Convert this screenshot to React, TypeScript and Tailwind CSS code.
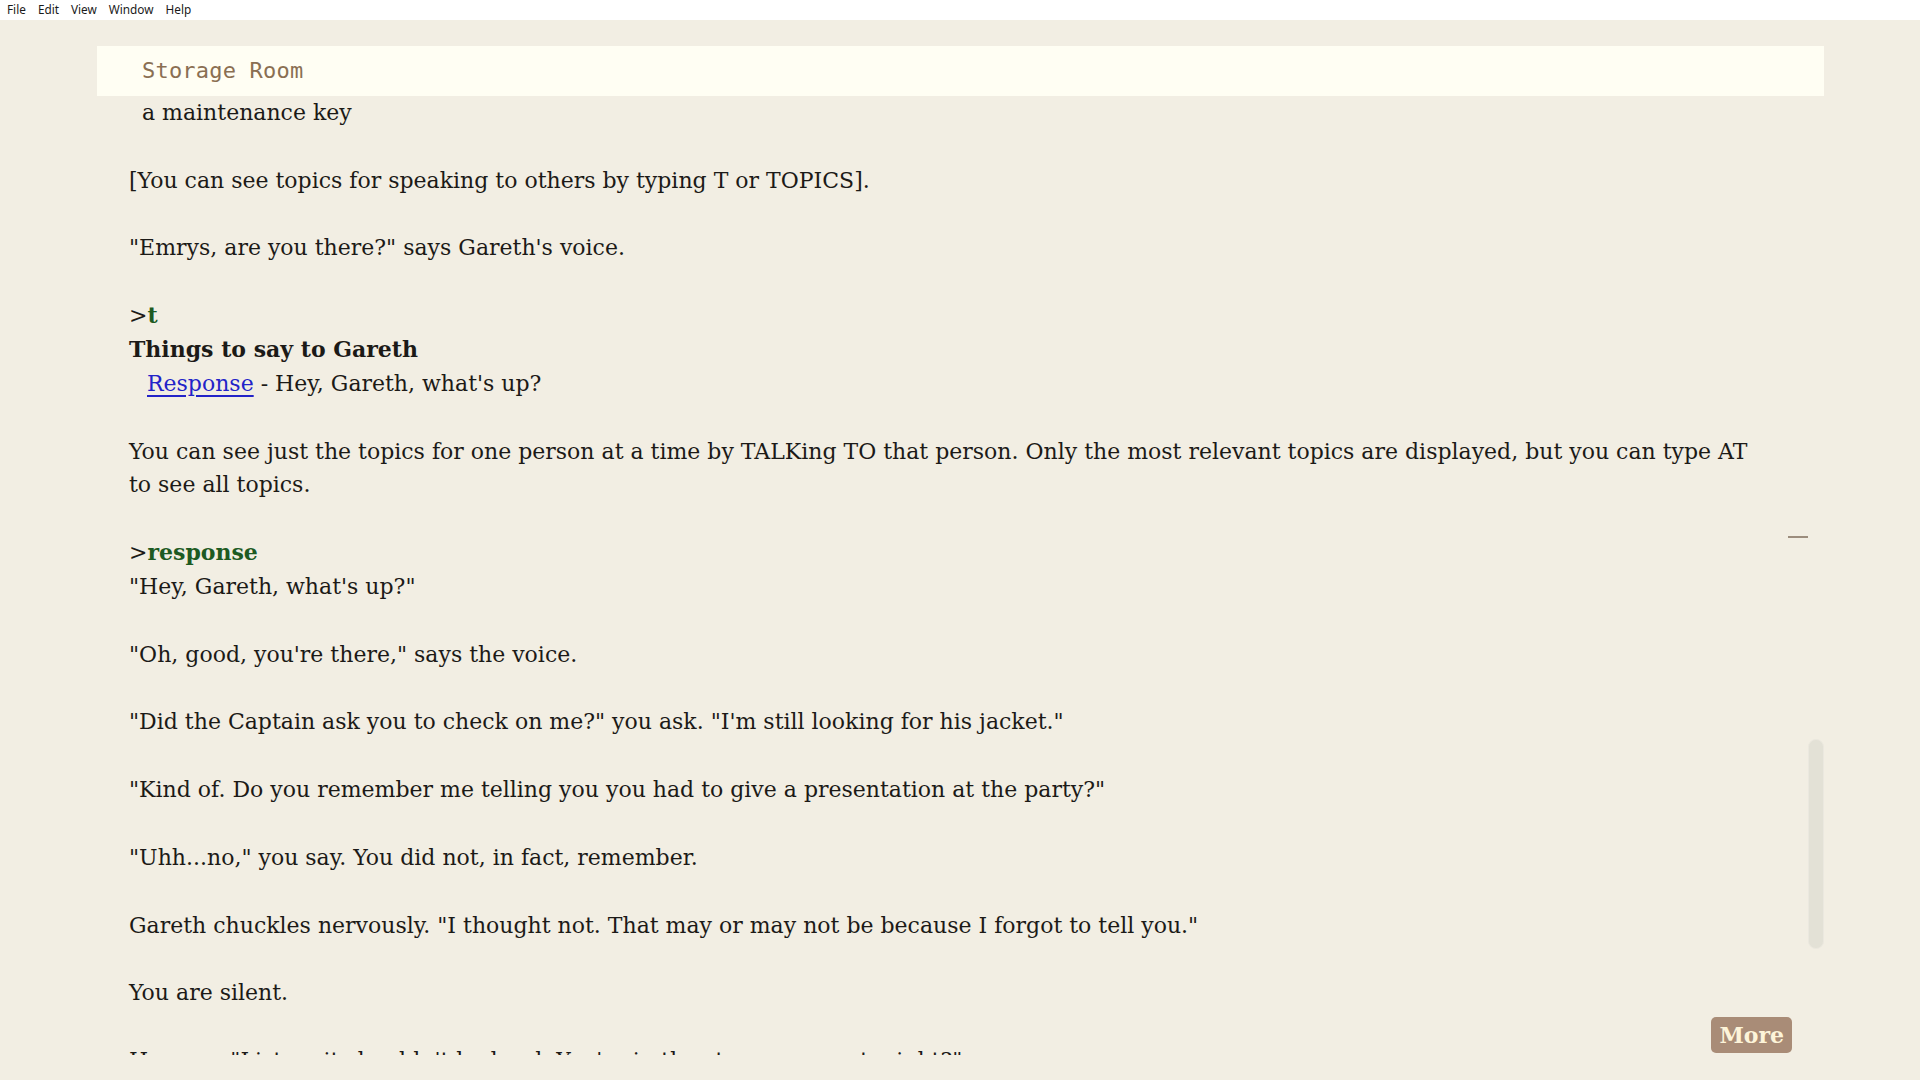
import React from 'react';

const menuItems = ['File', 'Edit', 'View', 'Window', 'Help'];

function Para({ children, gap = true }: { children: React.ReactNode; gap?: boolean }) {
  return <p className={gap ? 'mb-[33.86px]' : ''}>{children}</p>;
}

function Command({ text }: { text: string }) {
  return (
    <p>
      &gt;<span className="font-bold text-[#1d5a22]">{text}</span>
    </p>
  );
}

export default function App() {
  return (
    <div className="h-screen w-full flex flex-col bg-[#f2eee3] overflow-hidden">
      {/* window menu */}
      <div className="h-[20px] bg-white flex items-center gap-[12px] pl-[7px] text-[11.8px] text-[#1a1a1a] font-['Noto_Sans',sans-serif]">
        {menuItems.map((m) => (
          <span key={m}>{m}</span>
        ))}
      </div>

      <div className="flex-1 min-h-0 relative ml-[97px] mr-[96px] mt-[26px] mb-[25px] flex flex-col">
        <div className="h-[50px] shrink-0 bg-[#fffef3] flex items-center pl-[45px] pb-[2px]">
          <span className="font-['DejaVu_Sans_Mono',monospace] text-[22px] text-[#8a6f52] tracking-[0.2px]">Storage Room</span>
        </div>

        <div className="flex-1 min-h-0 overflow-hidden pl-[32px] pr-[62px] font-['DejaVu_Serif',serif] text-[22px] leading-[33.86px] text-[#1c1a17]">
          <Para>
            <span className="pl-[13px]">a maintenance key</span>
          </Para>
          <Para>[You can see topics for speaking to others by typing T or TOPICS].</Para>
          <Para>"Emrys, are you there?" says Gareth's voice.</Para>
          <Command text="t" />
          <p className="font-bold">Things to say to Gareth</p>
          <Para>
            <span className="pl-[18px]">
              <a className="text-[#2323c8] underline underline-offset-[4px]">Response</a> - Hey, Gareth, what's up?
            </span>
          </Para>
          <Para>
            You can see just the topics for one person at a time by TALKing TO that person. Only the most relevant topics are displayed, but you can type AT to see all topics.
          </Para>
          <Command text="response" />
          <Para>"Hey, Gareth, what's up?"</Para>
          <Para>"Oh, good, you're there," says the voice.</Para>
          <Para>"Did the Captain ask you to check on me?" you ask. "I'm still looking for his jacket."</Para>
          <Para>"Kind of. Do you remember me telling you you had to give a presentation at the party?"</Para>
          <Para>"Uhh...no," you say. You did not, in fact, remember.</Para>
          <Para>Gareth chuckles nervously. "I thought not. That may or may not be because I forgot to tell you."</Para>
          <Para>You are silent.</Para>
          <Para>He says, "Listen, it shouldn't be hard. You're in the storage room tonight?"</Para>
        </div>

        {/* scroll overlay */}
        <div className="absolute right-[16px] top-[490px] w-[20px] h-[2px] bg-[#9c8d7d]" />
        <div className="absolute right-0 top-[693px] w-[16px] h-[210px] rounded-full bg-[#e3e1d6] border border-[#ebe8df]" />
        <button className="absolute right-[32px] bottom-[2px] h-[36px] px-[8px] rounded-[5px] bg-[#a98c77] text-[#fdf4d9] font-['DejaVu_Serif',serif] font-bold text-[22px] leading-none">
          More
        </button>
      </div>
    </div>
  );
}
